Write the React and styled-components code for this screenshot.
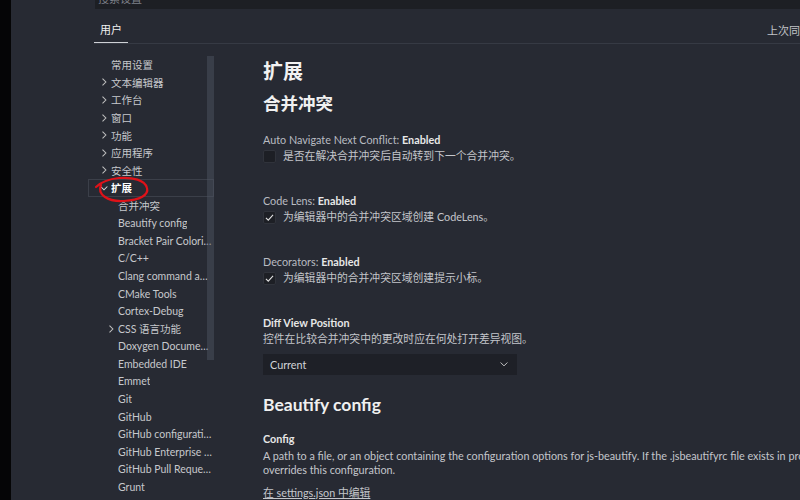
import React from "react";
import styled, { createGlobalStyle } from "styled-components";

const GlobalStyle = createGlobalStyle`
  html, body {
    margin: 0;
    padding: 0;
    background: #272a33;
    font-family: Lato, "Noto Sans CJK SC", sans-serif;
    overflow: hidden;
  }
`;

const navItems = [
  { label: "常用设置", level: 0 },
  { label: "文本编辑器", level: 0, chevron: "right" },
  { label: "工作台", level: 0, chevron: "right" },
  { label: "窗口", level: 0, chevron: "right" },
  { label: "功能", level: 0, chevron: "right" },
  { label: "应用程序", level: 0, chevron: "right" },
  { label: "安全性", level: 0, chevron: "right" },
  { label: "扩展", level: 0, chevron: "down", active: true },
  { label: "合并冲突", level: 1 },
  { label: "Beautify config", level: 1 },
  { label: "Bracket Pair Colorizer 2", level: 1 },
  { label: "C/C++", level: 1 },
  { label: "Clang command adapter", level: 1 },
  { label: "CMake Tools", level: 1 },
  { label: "Cortex-Debug", level: 1 },
  { label: "CSS 语言功能", level: 1, chevron: "right" },
  { label: "Doxygen Documentation Generator", level: 1 },
  { label: "Embedded IDE", level: 1 },
  { label: "Emmet", level: 1 },
  { label: "Git", level: 1 },
  { label: "GitHub", level: 1 },
  { label: "GitHub configuration", level: 1 },
  { label: "GitHub Enterprise Server Authentication", level: 1 },
  { label: "GitHub Pull Requests", level: 1 },
  { label: "Grunt", level: 1 },
];

export default function App() {
  return (
    <Page>
      <GlobalStyle />
      <EdgeStrip />
      <Main>
        <SearchBar>
          <span>搜索设置</span>
        </SearchBar>
        <Tabs>
          <Tab>用户</Tab>
          <SyncInfo>上次同步: 刚刚</SyncInfo>
        </Tabs>
        <Body>
          <Sidebar>
            {navItems.map(({ label, level, chevron, active }) => (
              <NavRow key={label} $level={level} $active={active} $chevron={!!chevron}>
                {chevron && <Chevron dir={chevron} />}
                <NavText>{label}</NavText>
              </NavRow>
            ))}
            <ScrollThumb />
            <Scribble viewBox="0 0 800 500">
              <path
                d="M101 185 C97 194, 107 202, 124 201 C140 200, 149 195, 147 188 C145 180, 133 177, 119 178 C109 179, 101 182, 96 187"
                fill="none"
                stroke="#de1219"
                strokeWidth="2.2"
                strokeLinecap="round"
              />
            </Scribble>
          </Sidebar>
          <Content>
            <PageTitle>扩展</PageTitle>

            <Section>
              <SectionTitle>合并冲突</SectionTitle>
              <Settings>
                <Setting>
                  <Label>
                    Auto Navigate Next Conflict: <b>Enabled</b>
                  </Label>
                  <CheckRow>
                    <Checkbox />
                    是否在解决合并冲突后自动转到下一个合并冲突。
                  </CheckRow>
                </Setting>

                <Setting>
                  <Label>
                    Code Lens: <b>Enabled</b>
                  </Label>
                  <CheckRow>
                    <Checkbox checked />
                    为编辑器中的合并冲突区域创建 CodeLens。
                  </CheckRow>
                </Setting>

                <Setting>
                  <Label>
                    Decorators: <b>Enabled</b>
                  </Label>
                  <CheckRow>
                    <Checkbox checked />
                    为编辑器中的合并冲突区域创建提示小标。
                  </CheckRow>
                </Setting>

                <Setting>
                  <Label $bold>Diff View Position</Label>
                  <Description>控件在比较合并冲突中的更改时应在何处打开差异视图。</Description>
                  <Select>
                    <span>Current</span>
                    <svg width="12" height="12" viewBox="0 0 16 16">
                      <path d="M3.5 6 L8 10.5 L12.5 6" fill="none" stroke="#c8c8c8" strokeWidth="1.3" />
                    </svg>
                  </Select>
                </Setting>
              </Settings>
            </Section>

            <Section $gapTop>
              <SectionTitle $latin>Beautify config</SectionTitle>
              <Settings>
                <Setting>
                  <Label $bold>Config</Label>
                  <Description>
                    A path to a file, or an object containing the configuration options for js-beautify. If the .jsbeautifyrc file exists in project root, it
                    <br />
                    overrides this configuration.
                  </Description>
                  <EditLink>在 settings.json 中编辑</EditLink>
                </Setting>
              </Settings>
            </Section>
          </Content>
        </Body>
      </Main>
    </Page>
  );
}

function Chevron({ dir }) {
  return (
    <ChevronIcon viewBox="0 0 16 16" width="12" height="12">
      {dir === "down" ? (
        <path d="M3.5 6 L8 10.5 L12.5 6" fill="none" stroke="#d8d8d8" strokeWidth="1.4" />
      ) : (
        <path d="M6 3.5 L10.5 8 L6 12.5" fill="none" stroke="#c0c0c0" strokeWidth="1.4" />
      )}
    </ChevronIcon>
  );
}

function Checkbox({ checked }) {
  return (
    <Box>
      {checked && (
        <svg width="13" height="13" viewBox="0 0 16 16">
          <path d="M2.8 8.5 L6.2 11.9 L13.2 4.2" fill="none" stroke="#e6e6e6" strokeWidth="1.5" />
        </svg>
      )}
    </Box>
  );
}

const Page = styled.div`
  display: flex;
  width: 800px;
  height: 500px;
  overflow: hidden;
  background: #272a33;
`;

const EdgeStrip = styled.div`
  width: 11px;
  flex-shrink: 0;
  background: #050506;
`;

const Main = styled.div`
  flex: 1;
  display: flex;
  flex-direction: column;
  min-width: 0;
`;

const SearchBar = styled.div`
  height: 9px;
  margin-left: 84px;
  background: #1d1f24;
  overflow: hidden;
  span {
    display: block;
    padding-left: 3px;
    margin-top: -8px;
    font-size: 11px;
    line-height: 14px;
    color: #7d8089;
  }
`;

const Tabs = styled.div`
  height: 34px;
  margin-left: 83px;
  display: flex;
  align-items: flex-end;
  justify-content: space-between;
  border-bottom: 1px solid #363a44;
  white-space: nowrap;
`;

const Tab = styled.div`
  padding: 0 6px 4px;
  width: 22px;
  font-size: 11px;
  line-height: 16px;
  color: #f0f0f0;
  border-bottom: 1px solid #cfd1d6;
`;

const SyncInfo = styled.div`
  padding-bottom: 4px;
  width: 33px;
  overflow: hidden;
  font-size: 11px;
  line-height: 16px;
  color: #c2c4c8;
`;

const Body = styled.div`
  flex: 1;
  display: flex;
  min-height: 0;
`;

const Sidebar = styled.div`
  position: relative;
  width: 126px;
  margin-left: 77px;
  padding-top: 12px;
  flex-shrink: 0;
`;

const NavRow = styled.div`
  display: flex;
  align-items: center;
  box-sizing: border-box;
  height: 17.6px;
  padding-left: ${({ $level, $chevron }) =>
    $level === 0 ? ($chevron ? 9 : 22) : $chevron ? 16 : 29}px;
  font-size: 10.5px;
  color: ${({ $active }) => ($active ? "#ffffff" : "#c6c8cc")};
  font-weight: ${({ $active }) => ($active ? 700 : 400)};
  border: 1px solid ${({ $active }) => ($active ? "#3b3f49" : "transparent")};
  white-space: nowrap;
`;

const ChevronIcon = styled.svg`
  flex-shrink: 0;
  margin-right: 1px;
`;

const NavText = styled.span`
  overflow: hidden;
  text-overflow: ellipsis;
  min-width: 0;
`;

const ScrollThumb = styled.div`
  position: absolute;
  top: 12px;
  right: 0;
  width: 7px;
  height: 304px;
  background: rgba(80, 86, 100, 0.45);
`;

const Scribble = styled.svg`
  position: absolute;
  left: -88px;
  top: -44px;
  width: 800px;
  height: 500px;
  pointer-events: none;
`;

const Content = styled.div`
  flex: 1;
  padding-left: 49px;
  padding-top: 14px;
  white-space: nowrap;
  color: #c8cacf;
`;

const PageTitle = styled.div`
  font-size: 20px;
  font-weight: 700;
  line-height: 26px;
  color: #f2f2f2;
`;

const Section = styled.div`
  display: flex;
  flex-direction: column;
  margin-top: ${({ $gapTop }) => ($gapTop ? 18 : 8)}px;
`;

const SectionTitle = styled.div`
  font-size: 17.5px;
  font-weight: 700;
  line-height: 24px;
  color: #f0f0f0;
  margin-bottom: ${({ $latin }) => ($latin ? 14.5 : 15.5)}px;
`;

const Settings = styled.div`
  display: flex;
  flex-direction: column;
  gap: 29.5px;
`;

const Setting = styled.div`
  display: flex;
  flex-direction: column;
`;

const Label = styled.div`
  font-size: 10.8px;
  line-height: 15px;
  color: ${({ $bold }) => ($bold ? "#e6e6e6" : "#b9bcc2")};
  font-weight: ${({ $bold }) => ($bold ? 700 : 400)};
  b {
    color: #e8e8e8;
    font-weight: 700;
  }
`;

const CheckRow = styled.div`
  display: flex;
  align-items: center;
  gap: 7px;
  margin-top: 2.5px;
  font-size: 10.8px;
  line-height: 14px;
  color: #c4c6cb;
`;

const Box = styled.div`
  width: 13px;
  height: 13px;
  box-sizing: border-box;
  background: #1d1f25;
  border: 1px solid #30333b;
  border-radius: 2px;
  display: flex;
  align-items: center;
  justify-content: center;
  svg {
    margin-top: 1px;
  }
`;

const Description = styled.div`
  font-size: 10.8px;
  line-height: 14px;
  color: #c4c6cb;
  margin-top: 2.5px;
`;

const Select = styled.div`
  margin-top: 7.5px;
  width: 254px;
  height: 21px;
  box-sizing: border-box;
  padding: 0 7px;
  display: flex;
  align-items: center;
  justify-content: space-between;
  background: #1e2027;
  font-size: 10.8px;
  color: #d2d4d8;
`;

const EditLink = styled.div`
  margin-top: 9px;
  font-size: 10.8px;
  line-height: 14px;
  color: #c4c6cb;
  text-decoration: underline;
`;
